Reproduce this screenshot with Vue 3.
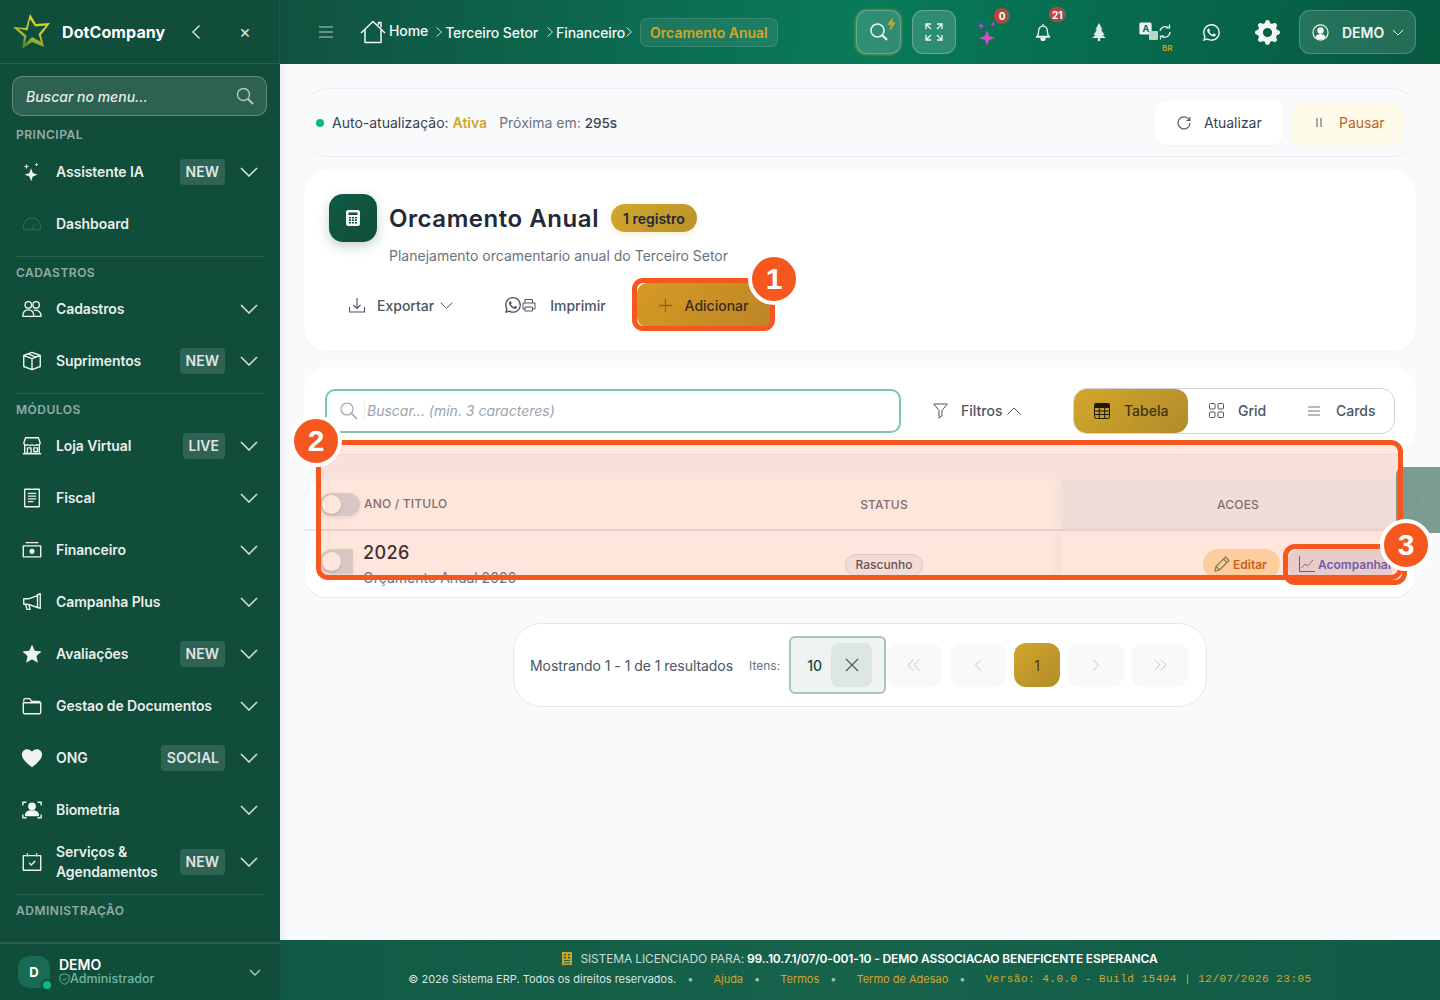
<script setup>
const icons = {
  sparkles: '<path fill="currentColor" stroke="none" d="M11 8l1.9 5.1L18 15l-5.1 1.9L11 22l-1.9-5.1L4 15l5.1-1.9zM6 3l.8 2.2L9 6l-2.2.8L6 9l-.8-2.2L3 6l2.2-.8zM17 2l.6 1.4L19 4l-1.4.6L17 6l-.6-1.4L15 4l1.4-.6z"/>',
  gauge: '<path d="M3 18a9.5 9.5 0 1 1 18 0zM12 18l3-6M6 14h1M17 14h1M12 8v1"/>',
  people: '<circle cx="8" cy="7.5" r="3.5"/><circle cx="16.5" cy="7.5" r="3.5"/><path d="M2 20c0-5 3-7 6-7s6 2 6 7zM14 13.5c4 -1 8 1.500 8 6.500h-8"/>',
  box: '<path d="M12 2.500l9 3.500v12l-9 3.500-9-3.500V6zM3 6l9 3.500L21 6M12 9.500v12M7.500 4.300l9 3.500"/>',
  store: '<path d="M4 10v10h16V10M2 20.500h20M3 9l2-6h14l2 6a3 3 0 0 1-4.500 1.500 3 3 0 0 1-4.500 0 3 3 0 0 1-4.500 0A3 3 0 0 1 3 9zM7 20v-6h4v6M14 14h4v4h-4z"/>',
  receipt: '<path d="M4 2.500h16v19H4zM7.500 7h9M7.500 10h9M7.500 13h9M7.500 16h6" stroke-dasharray="none"/>',
  cash: '<path d="M5 4h14M2.500 7.500h19v12h-19z"/><circle cx="12" cy="13.500" r="2" fill="currentColor"/>',
  megaphone: '<path d="M21 3v16l-3-1V4zM18 5L8 8.500H3v6h5L18 18M5 14.500l1.500 5.500h3.500l-1.500-5"/>',
  star: '<path fill="currentColor" stroke="none" d="M12 1.500l3 7 7.500.7-5.700 5 1.700 7.300L12 17.700l-6.500 3.800 1.700-7.300-5.700-5 7.500-.7z"/>',
  folder: '<path d="M3 7V5.500A1.500 1.500 0 0 1 4.500 4h5l2 3h8A1.500 1.500 0 0 1 21 8.500M2.500 8.500h19V19a1.500 1.500 0 0 1-1.500 1.500H4A1.500 1.500 0 0 1 2.500 19z"/>',
  heart: '<path fill="currentColor" stroke="none" d="M12 22C4 16 1 12.500 1 8.300 1 5 3.500 2.500 6.700 2.500c2.100 0 4.100 1 5.300 2.800 1.200-1.800 3.200-2.800 5.300-2.800C20.500 2.500 23 5 23 8.300 23 12.500 20 16 12 22z"/>',
  face: '<path d="M2 7V3.500h4M18 3.500h4V7M2 17v3.500h4M18 20.500h4V17"/><circle cx="12" cy="8" r="3.500" fill="currentColor"/><path fill="currentColor" d="M5 18c0-3.500 3-5 7-5s7 1.500 7 5z"/>',
  calendar: '<path d="M2.500 5h19v16h-19zM7 2.500V6M17 2.500V6M9 13l2.200 2.200L15.500 11"/>'
}

const menu = [
  { title: 'PRINCIPAL', items: [
    { label: 'Assistente IA', icon: 'sparkles', badge: 'NEW', caret: true },
    { label: 'Dashboard', icon: 'gauge', dim: true }
  ] },
  { title: 'CADASTROS', items: [
    { label: 'Cadastros', icon: 'people', caret: true },
    { label: 'Suprimentos', icon: 'box', badge: 'NEW', caret: true }
  ] },
  { title: 'MÓDULOS', items: [
    { label: 'Loja Virtual', icon: 'store', badge: 'LIVE', caret: true },
    { label: 'Fiscal', icon: 'receipt', caret: true },
    { label: 'Financeiro', icon: 'cash', caret: true },
    { label: 'Campanha Plus', icon: 'megaphone', caret: true },
    { label: 'Avaliações', icon: 'star', badge: 'NEW', caret: true },
    { label: 'Gestao de Documentos', icon: 'folder', caret: true },
    { label: 'ONG', icon: 'heart', badge: 'SOCIAL', caret: true },
    { label: 'Biometria', icon: 'face', caret: true },
    { label: 'Serviços & Agendamentos', icon: 'calendar', badge: 'NEW', caret: true }
  ] },
  { title: 'ADMINISTRAÇÃO', items: [] }
]
const whatsapp = 'M13.601 2.326A7.854 7.854 0 0 0 7.994 0C3.627 0 .068 3.558.064 7.926c0 1.399.366 2.76 1.057 3.965L0 16l4.204-1.102a7.9 7.9 0 0 0 3.79.965h.004c4.368 0 7.926-3.558 7.93-7.93A7.898 7.898 0 0 0 13.6 2.326zM7.994 14.521a6.573 6.573 0 0 1-3.356-.92l-.24-.144-2.494.654.666-2.433-.156-.251a6.56 6.56 0 0 1-1.007-3.505c0-3.626 2.957-6.584 6.591-6.584a6.56 6.56 0 0 1 4.66 1.931 6.557 6.557 0 0 1 1.928 4.66c-.004 3.639-2.961 6.592-6.592 6.592zm3.615-4.934c-.197-.099-1.17-.578-1.353-.646-.182-.065-.315-.099-.445.099-.133.197-.513.646-.627.775-.114.133-.232.148-.43.05-.197-.1-.836-.308-1.592-.985-.59-.525-.985-1.175-1.103-1.372-.114-.198-.011-.304.088-.403.087-.088.197-.232.296-.346.1-.114.133-.198.198-.33.065-.134.034-.248-.015-.347-.05-.099-.445-1.076-.612-1.47-.16-.389-.323-.335-.445-.34-.114-.007-.247-.007-.38-.007a.729.729 0 0 0-.529.247c-.182.198-.691.677-.691 1.654 0 .977.71 1.916.81 2.049.098.133 1.394 2.132 3.383 2.992.47.205.84.326 1.129.418.475.152.904.129 1.246.08.38-.058 1.171-.48 1.338-.943.164-.464.164-.86.114-.943-.049-.084-.182-.133-.38-.232z'
const gear = 'M9.405 1.05c-.413-1.4-2.397-1.4-2.81 0l-.1.34a1.464 1.464 0 0 1-2.105.872l-.31-.17c-1.283-.698-2.686.705-1.987 1.987l.169.311c.446.82.023 1.841-.872 2.105l-.34.1c-1.4.413-1.4 2.397 0 2.81l.34.1a1.464 1.464 0 0 1 .872 2.105l-.17.31c-.698 1.283.705 2.686 1.987 1.987l.311-.169a1.464 1.464 0 0 1 2.105.872l.1.34c.413 1.4 2.397 1.4 2.81 0l.1-.34a1.464 1.464 0 0 1 2.105-.872l.31.17c1.283.698 2.686-.705 1.987-1.987l-.169-.311a1.464 1.464 0 0 1 .872-2.105l.34-.1c1.4-.413 1.4-2.397 0-2.81l-.34-.1a1.464 1.464 0 0 1-.872-2.105l.17-.31c.698-1.283-.705-2.686-1.987-1.987l-.311.169a1.464 1.464 0 0 1-2.105-.872l-.1-.34zM8 10.93a2.929 2.929 0 1 1 0-5.86 2.929 2.929 0 0 1 0 5.858z'
</script>

<template>
  <div class="app">
    <aside class="sidebar">
      <div class="brand">
        <svg class="logo" width="38" height="38" viewBox="0 0 38 38">
          <defs>
            <linearGradient id="logoGrad" x1="0.7" y1="0" x2="0.2" y2="1">
              <stop offset="0" stop-color="#e8dc2c" />
              <stop offset="0.55" stop-color="#b5c22c" />
              <stop offset="1" stop-color="#2f7a3a" />
            </linearGradient>
          </defs>
          <path fill="url(#logoGrad)" fill-rule="evenodd" d="M17 1l6 10 14-1-9 12 3 12-12-5L9 36l2-12L0 14l13 1zM17 6l-2.500 11.500L5 15.500l8.500 7L12 31l7-7 9 5-2.500-8L33 12.500l-11 1z" />
        </svg>
        <span class="brand-name">DotCompany</span>
        <svg class="brand-back" width="10" height="16" viewBox="0 0 10 16" fill="none" stroke="currentColor" stroke-width="1.500"><path d="M8.500 1.500L2 8l6.500 6.500" /></svg>
        <span class="brand-close">×</span>
      </div>
      <div class="menu-search">
        <span>Buscar no menu...</span>
        <svg width="18" height="18" viewBox="0 0 18 18" fill="none" stroke="currentColor" stroke-width="1.400"><circle cx="7.500" cy="7.500" r="6" /><path d="M12 12l5 5" stroke-width="2" /></svg>
      </div>
      <nav class="nav">
        <section v-for="(sec, i) in menu" :key="sec.title" class="nav-section" :class="{ first: i === 0 }">
          <h6>{{ sec.title }}</h6>
          <a v-for="item in sec.items" :key="item.label" class="nav-item">
            <svg class="nav-icon" :class="{ dim: item.dim }" width="22" height="22" viewBox="0 0 24 24" fill="none" stroke="currentColor" stroke-width="1.500" stroke-linejoin="round" v-html="icons[item.icon]"></svg>
            <span class="nav-label">{{ item.label }}</span>
            <span v-if="item.badge" class="nav-badge">{{ item.badge }}</span>
            <svg v-if="item.caret" class="nav-caret" width="18" height="10" viewBox="0 0 18 10" fill="none" stroke="currentColor" stroke-width="1.500"><path d="M1 1l8 8 8-8" /></svg>
          </a>
        </section>
      </nav>
      <div class="user">
        <div class="avatar">D<i></i></div>
        <div class="user-text">
          <strong>DEMO</strong>
          <span>
            <svg width="11" height="12" viewBox="0 0 12 13" fill="none" stroke="currentColor" stroke-width="1"><path d="M6 .8l5 1.700v4C11 9.500 8.500 11.500 6 12.300 3.500 11.500 1 9.500 1 6.500v-4zM3.800 6.300l1.600 1.600 2.800-2.800" /></svg>Administrador
          </span>
        </div>
        <svg class="user-caret" width="12" height="7" viewBox="0 0 12 7" fill="none" stroke="currentColor" stroke-width="1.300"><path d="M1 1l5 5 5-5" /></svg>
      </div>
    </aside>

    <div class="main">
      <header class="topbar">
        <div class="crumbs">
          <svg class="burger" width="14" height="12" viewBox="0 0 14 12" fill="none" stroke="currentColor" stroke-width="1.200"><path d="M0 1h14M0 6h14M0 11h14" /></svg>
          <svg class="home-icon" width="26" height="24" viewBox="0 0 26 24" fill="none" stroke="currentColor" stroke-width="1.500" stroke-linejoin="round"><path d="M1 13L13 1.500 25 13M5 10v12.500h16V10M18.500 5V2.500h2.500v5" /></svg>
          <span class="crumb home">Home</span>
          <svg class="sep s1" width="8" height="10" viewBox="0 0 8 10" fill="none" stroke="currentColor"><path d="M1.500 .5L6.500 5l-5 4.500" /></svg>
          <span class="crumb">Terceiro Setor</span>
          <svg class="sep s2" width="8" height="10" viewBox="0 0 8 10" fill="none" stroke="currentColor"><path d="M1.500 .5L6.500 5l-5 4.500" /></svg>
          <span class="crumb">Financeiro</span>
          <svg class="sep" width="8" height="10" viewBox="0 0 8 10" fill="none" stroke="currentColor"><path d="M1.500 .5L6.500 5l-5 4.500" /></svg>
          <span class="crumb-current">Orcamento Anual</span>
        </div>
        <div class="tools">
          <button class="tool-btn search-glow">
            <svg width="20" height="20" viewBox="0 0 20 20" fill="none" stroke="currentColor" stroke-width="1.500"><circle cx="8.500" cy="8.500" r="6.500" /><path d="M13.500 13.500L18 18" stroke-width="2.200" /></svg>
            <svg class="bolt" width="9" height="14" viewBox="0 0 9 14"><path fill="#b8a83a" d="M6 0L0 8h3.500L2.500 14 9 5.500H5.300z" /></svg>
          </button>
          <button class="tool-btn">
            <svg width="18" height="18" viewBox="0 0 18 18" fill="none" stroke="currentColor" stroke-width="1.300"><path d="M1 6V1h5M1 1l5 5M12 1h5v5M17 1l-5 5M1 12v5h5M1 17l5-5M12 17h5v-5M17 17l-5-5" /></svg>
          </button>
          <div class="tool-slot">
            <svg width="26" height="28" viewBox="0 0 26 28">
              <path fill="#d94bc6" d="M13 12l2 6 6 2-6 2-2 6-2-6-6-2 6-2z" />
              <path fill="#c23fd6" d="M7 4l1 3 3 1-3 1-1 3-1-3-3-1 3-1zM19 3l.8 2.200L22 6l-2.200.8L19 9l-.8-2.200L16 6l2.200-.8z" />
            </svg>
            <b class="count c0">0</b>
          </div>
          <div class="tool-slot">
            <svg width="16" height="18" viewBox="0 0 16 18" fill="none" stroke="#f2f7f5" stroke-width="1.300"><path d="M2 13.500h12c-1.200-1.400-1.600-2.500-1.600-5 0-3-1.500-5.300-4.400-5.300S3.600 5.500 3.600 8.500c0 2.500-.4 3.600-1.600 5zM1 14h14M8 1v2" /><path fill="#f2f7f5" d="M6 15.500h4a2 2 0 0 1-4 0z" /></svg>
            <b class="count c21">21</b>
          </div>
          <div class="tool-slot">
            <svg width="14" height="18" viewBox="0 0 14 18"><path fill="#dcebe6" d="M7 0l3.500 6.500H9l3.500 5.500H10.500L14 15H8.200v3H5.800v-3H0l3.500-3H1.500L5 6.500H3.500z" /></svg>
          </div>
          <div class="tool-slot">
            <svg width="32" height="20" viewBox="0 0 32 20" fill="none" stroke="#f0f6f4" stroke-width="1.200">
              <rect x="1" y="1" width="11" height="11" rx="1" fill="#e9f2ef" />
              <text x="3.500" y="10" font-size="9" font-weight="700" font-family="Inter, sans-serif" fill="#0a6a50" stroke="none">A</text>
              <rect x="10" y="9" width="9" height="9" rx="1" fill="#b9d5cc" stroke="none" />
              <path d="M21 9a5.500 5.500 0 0 1 9-3M31 10a5.500 5.500 0 0 1-9 4M30.500 2.500V6H27M21.500 17.500V14H25" />
            </svg>
            <span class="br">BR</span>
          </div>
          <div class="tool-slot">
            <svg width="17" height="17" viewBox="0 0 16 16"><path fill="#f2f7f5" :d="whatsapp" /></svg>
          </div>
          <div class="tool-slot">
            <svg width="25" height="25" viewBox="0 0 16 16"><path fill="#f2f7f5" :d="gear" /></svg>
          </div>
          <button class="user-btn">
            <svg width="17" height="17" viewBox="0 0 18 18" fill="none" stroke="currentColor" stroke-width="1.300"><circle cx="9" cy="9" r="8" /><circle cx="9" cy="7" r="2.800" fill="currentColor" /><path fill="currentColor" stroke="none" d="M3.500 14c1-2.500 3-3.500 5.500-3.500s4.500 1 5.500 3.500A7.500 7.500 0 0 1 9 16.500 7.500 7.500 0 0 1 3.500 14z" /></svg>
            <span>DEMO</span>
            <svg width="12" height="7" viewBox="0 0 12 7" fill="none" stroke="currentColor" stroke-width="1"><path d="M1 1l5 5 5-5" /></svg>
          </button>
        </div>
      </header>

      <main class="content">
        <div class="refresh-bar">
          <i class="live-dot"></i>
          <span class="refresh-label">Auto-atualização: <b>Ativa</b></span>
          <span class="refresh-next">Próxima em: <em>295s</em></span>
          <button class="btn-refresh">
            <svg width="14" height="14" viewBox="0 0 14 14" fill="none" stroke="#4b5563" stroke-width="1.200"><path d="M12.500 4.500A6 6 0 1 0 13 7M12.800 1v3.500H9.500" /></svg>
            Atualizar
          </button>
          <button class="btn-pause">
            <svg width="8" height="9" viewBox="0 0 8 9" fill="none" stroke="#6b7280" stroke-width="1.200"><path d="M2 0v9M6 0v9" /></svg>
            Pausar
          </button>
        </div>

        <section class="page-head">
          <div class="head-row">
            <div class="head-icon">
              <svg width="14" height="16" viewBox="0 0 14 16"><rect x=".5" y=".5" width="13" height="15" rx="1.500" fill="#f4f8f6" stroke="#f4f8f6" /><rect x="2.500" y="2.500" width="9" height="2.500" fill="#114d3b" /><path d="M3 7h2v1.500H3zM6 7h2v1.500H6zM9 7h2v1.500H9zM3 9.500h2V11H3zM6 9.500h2V11H6zM9 9.500h2V11H9zM3 12h2v1.500H3zM6 12h2v1.500H6zM9 12h2v1.500H9z" fill="#114d3b" /></svg>
            </div>
            <h1>Orcamento Anual</h1>
            <span class="count-pill">1 registro</span>
          </div>
          <p class="head-sub">Planejamento orcamentario anual do Terceiro Setor</p>
          <div class="head-actions">
            <button class="act">
              <svg width="16" height="16" viewBox="0 0 16 16" fill="none" stroke="currentColor" stroke-width="1.100"><path d="M.5 10v5h15v-5M8 1v10M4.500 8L8 11.500 11.500 8" /></svg>
              <span>Exportar</span>
              <svg class="act-caret" width="13" height="7" viewBox="0 0 13 7" fill="none" stroke="currentColor"><path d="M.7.7l5.800 5.600L12.300.7" /></svg>
            </button>
            <button class="act">
              <svg class="act-double" width="31" height="17" viewBox="0 0 31 17" fill="none" stroke="currentColor">
                <svg width="16" height="16" viewBox="0 0 16 16"><path fill="currentColor" stroke="none" :d="whatsapp" /></svg>
                <path d="M20 6V2.500h7.500V6M20 12h-2V6h12v6h-2.500M20 10h7.500v4H20z" />
              </svg>
              <span>Imprimir</span>
            </button>
            <button class="act act-add">
              <svg width="13" height="13" viewBox="0 0 13 13" fill="none" stroke="#7d6a2a" stroke-width="1.300"><path d="M6.500 0v13M0 6.500h13" /></svg>
              <span>Adicionar</span>
            </button>
          </div>
        </section>

        <section class="toolbar">
          <div class="search">
            <svg width="18" height="18" viewBox="0 0 18 18" fill="none" stroke="#9ca3af" stroke-width="1.100"><circle cx="7" cy="7" r="6" /><path d="M11.500 11.500L17 17" stroke-width="1.600" /></svg>
            <span class="search-ph">Buscar... (mín. 3 caracteres)</span>
          </div>
          <button class="filters">
            <svg width="15" height="16" viewBox="0 0 15 16" fill="none" stroke="#4b5563"><path d="M.7 1h13.600L9 7.500V13l-3 2V7.500z" /></svg>
            <span>Filtros</span>
            <svg width="14" height="8" viewBox="0 0 14 8" fill="none" stroke="#4b5563"><path d="M.5 7.500L7 1l6.500 6.500" /></svg>
          </button>
          <div class="views">
            <button class="view active">
              <svg width="16" height="16" viewBox="0 0 16 16"><rect x=".5" y=".5" width="15" height="15" rx="2" fill="none" stroke="#1f1a08" /><path d="M.5 .5h15V5H.5z" fill="#1f1a08" /><path d="M0 8h16M0 11.500h16M5.300 5v11M10.700 5v11" stroke="#1f1a08" fill="none" /></svg>
              <span>Tabela</span>
            </button>
            <button class="view grid">
              <svg width="15" height="15" viewBox="0 0 15 15" fill="none" stroke="#4b5563"><rect x=".5" y=".5" width="5.500" height="5.500" rx="1" /><rect x="9" y=".5" width="5.500" height="5.500" rx="1" /><rect x=".5" y="9" width="5.500" height="5.500" rx="1" /><rect x="9" y="9" width="5.500" height="5.500" rx="1" /></svg>
              <span>Grid</span>
            </button>
            <button class="view cards">
              <svg width="12" height="10" viewBox="0 0 12 10" fill="none" stroke="#9ca3af" stroke-width="1.400"><path d="M0 1h12M0 5h12M0 9h12" /></svg>
              <span>Cards</span>
            </button>
          </div>
        </section>

        <section class="table-card">
          <table>
            <colgroup><col class="c-title" /><col class="c-status" /><col class="c-acts" /></colgroup>
            <thead>
              <tr>
                <th class="th-title"><span class="switch"><i></i></span>ANO / TITULO</th>
                <th>STATUS</th>
                <th class="sticky">ACOES</th>
              </tr>
            </thead>
            <tbody>
              <tr>
                <td class="td-title">
                  <div class="title-wrap">
                    <span class="switch cut"><i></i></span>
                    <div>
                      <div class="year">2026</div>
                      <div class="year-sub">Orçamento Anual 2026</div>
                    </div>
                  </div>
                </td>
                <td class="td-status"><span class="status">Rascunho</span></td>
                <td class="sticky td-acts">
                  <div class="acts">
                    <button class="row-btn edit">
                      <svg width="16" height="16" viewBox="0 0 16 16" fill="none" stroke="#6b7a5a" stroke-width="1.100"><path d="M11.500 1l3.500 3.500L5.500 14 1 15l1-4.500zM9.500 3l3.500 3.500M2 10.500L5.500 14" /></svg>
                      Editar
                    </button>
                    <button class="row-btn track">
                      <svg width="16" height="16" viewBox="0 0 16 16" fill="none"><path d="M.5 0v15.500H16" stroke="#3f6d4f" /><path d="M2.500 12l3.500-4 2.500 2L14 4" stroke="#6b7280" /></svg>
                      Acompanhar
                    </button>
                  </div>
                </td>
              </tr>
            </tbody>
          </table>
        </section>

        <section class="pager-card">
          <span class="pg-info">Mostrando 1 - 1 de 1 resultados</span>
          <span class="pg-items">Itens:</span>
          <div class="pg-select">
            <span>10</span>
            <i>
              <svg width="14" height="14" viewBox="0 0 14 14" fill="none" stroke="#4b5563" stroke-width="1.100"><path d="M1 1l12 12M13 1L1 13" /></svg>
            </i>
          </div>
          <button class="pg wide"><svg width="14" height="12" viewBox="0 0 14 12" fill="none" stroke="#c5c9cf"><path d="M6.500 .5L1 6l5.500 5.500M12.500 .5L7 6l5.500 5.500" /></svg></button>
          <button class="pg wide"><svg width="8" height="12" viewBox="0 0 8 12" fill="none" stroke="#c5c9cf"><path d="M7 .5L1.500 6 7 11.500" /></svg></button>
          <button class="pg on">1</button>
          <button class="pg wide"><svg width="8" height="12" viewBox="0 0 8 12" fill="none" stroke="#c5c9cf"><path d="M1 .5L6.500 6 1 11.500" /></svg></button>
          <button class="pg wide"><svg width="14" height="12" viewBox="0 0 14 12" fill="none" stroke="#c5c9cf"><path d="M1.500 .5L7 6l-5.500 5.500M7.500 .5L13 6l-5.500 5.500" /></svg></button>
        </section>
      </main>

      <footer class="footer">
        <div class="lic">
          <svg width="10" height="13" viewBox="0 0 10 13"><path fill="#c9a227" d="M0 0h10v13H0z" /><path fill="#17634c" d="M2 2h2v1.500H2zM6 2h2v1.500H6zM2 5h2v1.500H2zM6 5h2v1.500H6zM2 8h6v1H2zM2 10.500h6v1H2z" /></svg>
          <span>SISTEMA LICENCIADO PARA:</span>
          <b>99..10.7.1/07/0-001-10 - DEMO ASSOCIACAO BENEFICENTE ESPERANCA</b>
        </div>
        <div class="legal">
          <span class="copy">© 2026 Sistema ERP. Todos os direitos reservados.</span>
          <i>•</i><a>Ajuda</a>
          <i>•</i><a>Termos</a>
          <i>•</i><a>Termo de Adesao</a>
          <i>•</i><code>Versão: 4.0.0 - Build 15494 | 12/07/2026 23:05</code>
        </div>
      </footer>
    </div>

    <div class="side-tab">
      <svg width="8" height="14" viewBox="0 0 8 14" fill="none" stroke="#6f9184"><path d="M7 1L1 7l6 6" /></svg>
    </div>

    <div class="mark mark-1"></div>
    <div class="mark mark-2"></div>
    <div class="mark mark-3"></div>
    <span class="pin pin-1">1</span>
    <span class="pin pin-2">2</span>
    <span class="pin pin-3">3</span>
  </div>
</template>

<style>
html, body { margin: 0; background: #f8fafc; }
</style>

<style scoped>
* { box-sizing: border-box; }
button { font: inherit; border: 0; background: none; padding: 0; color: inherit; }

.app {
  position: relative;
  display: flex;
  width: 1440px;
  height: 1000px;
  overflow: hidden;
  font-family: Inter, "Noto Sans", sans-serif;
  color: #374151;
  background: #f8fafc;
}

/* sidebar */
.sidebar {
  flex: 0 0 280px;
  display: flex;
  flex-direction: column;
  background: #114d3b;
  color: rgba(255, 255, 255, .93);
  box-shadow: 2px 0 10px rgba(15, 30, 50, .08);
  z-index: 2;
}
.brand {
  height: 64px;
  display: flex;
  align-items: center;
  padding-left: 13px;
  border-bottom: 1px solid rgba(255, 255, 255, .1);
  border-right: 1px solid rgba(255, 255, 255, .06);
}
.logo { flex: none; }
.brand-name {
  width: 111px;
  margin-left: 11px;
  font-size: 16px;
  font-weight: 700;
  letter-spacing: .1px;
  color: #fff;
  white-space: nowrap;
  overflow: hidden;
  text-overflow: ellipsis;
}
.brand-back { margin-left: 18px; color: rgba(255, 255, 255, .8); }
.brand-close { margin-left: 38px; font-size: 18px; color: rgba(255, 255, 255, .85); }

.menu-search {
  height: 40px;
  margin: 12px 13px 0 12px;
  padding: 0 12px 0 13px;
  display: flex;
  align-items: center;
  justify-content: space-between;
  background: rgba(255, 255, 255, .12);
  border: 1px solid rgba(255, 255, 255, .25);
  border-radius: 10px;
  font-size: 14px;
  font-style: italic;
  font-weight: 500;
  color: rgba(255, 255, 255, .9);
}
.menu-search svg { color: rgba(255, 255, 255, .65); }

.nav { flex: 1; padding-top: 4px; overflow: hidden; }
.nav-section { border-top: 1px solid rgba(255, 255, 255, .1); margin: 6px 16px 0; }
.nav-section.first { border-top: 0; margin-top: 0; }
.nav-section h6 {
  margin: 0;
  height: 26px;
  padding-top: 9px;
  font-size: 12px;
  line-height: 14px;
  font-weight: 600;
  letter-spacing: .5px;
  color: rgba(255, 255, 255, .55);
}
.nav-section.first h6 { padding-top: 8px; }
.nav-item {
  height: 52px;
  display: flex;
  align-items: center;
  font-size: 14px;
  line-height: 20px;
  font-weight: 600;
}
.nav-icon { flex: none; margin: 0 13px 0 5px; }
.nav-icon.dim { color: #226a55; }
.nav-label { flex: 1; max-width: 170px; letter-spacing: -.1px; }
.nav-badge {
  margin-left: auto;
  height: 26px;
  padding: 0 6px;
  display: flex;
  align-items: center;
  background: rgba(255, 255, 255, .13);
  border-radius: 4px;
  font-size: 14px;
  color: rgba(255, 255, 255, .85);
}
.nav-caret { flex: none; margin: 0 6px 0 15px; color: rgba(255, 255, 255, .85); }
.nav-label + .nav-caret { margin-left: auto; }

.user {
  height: 58px;
  display: flex;
  align-items: center;
  padding: 0 18px;
  border-top: 2px solid rgba(255, 255, 255, .12);
}
.avatar {
  position: relative;
  flex: none;
  width: 32px;
  height: 32px;
  display: flex;
  align-items: center;
  justify-content: center;
  border-radius: 12px;
  background: #1a6b55;
  font-size: 13px;
  font-weight: 700;
  color: #fff;
}
.avatar i {
  position: absolute;
  right: -1px;
  bottom: -1px;
  width: 8px;
  height: 8px;
  border-radius: 50%;
  background: #10b981;
  box-shadow: 0 0 0 2px #114d3b;
}
.user-text { margin-left: 9px; display: flex; flex-direction: column; }
.user-text strong { font-size: 14px; line-height: 14px; font-weight: 600; color: #fff; }
.user-text span {
  display: flex;
  align-items: center;
  font-size: 12.5px;
  line-height: 14px;
  font-weight: 500;
  color: #6fb89f;
}
.user-caret { margin-left: auto; margin-right: 1px; color: rgba(255, 255, 255, .7); }

/* top bar */
.main { flex: 1; min-width: 0; display: flex; flex-direction: column; }
.topbar {
  flex: 0 0 64px;
  display: flex;
  align-items: center;
  justify-content: space-between;
  padding: 0 24px 0 39px;
  background: linear-gradient(100deg, #11523f 0%, #087a5a 50%, #06583f 100%);
  color: #f1f7f5;
  box-shadow: 0 1px 4px rgba(15, 30, 50, .1);
}
.crumbs { display: flex; align-items: center; }
.burger { color: rgba(255, 255, 255, .7); margin-right: 27px; }
.home-icon { margin-right: 3px; margin-top: -1px; }
.crumb { font-size: 14px; font-weight: 500; letter-spacing: -.1px; }
.crumb.home { margin-top: -3px; }
.sep { margin: 0 0 0 0; color: rgba(255, 255, 255, .8); flex: none; }
.sep.s1 { margin: 0 2px 0 7px; }
.sep.s2 { margin: 0 2px 0 8px; }
.crumb-current {
  margin-left: 7px;
  height: 29px;
  padding: 0 9px;
  display: flex;
  align-items: center;
  background: rgba(255, 255, 255, .08);
  border: 1px solid rgba(255, 255, 255, .12);
  border-radius: 7px;
  font-size: 14px;
  font-weight: 600;
  color: #d4a52a;
}
.tools { display: flex; align-items: center; }
.tool-btn {
  position: relative;
  width: 44px;
  height: 44px;
  display: flex;
  align-items: center;
  justify-content: center;
  margin-right: 11px;
  background: rgba(255, 255, 255, .16);
  border: 1px solid rgba(255, 255, 255, .25);
  border-radius: 11px;
  color: #f1f7f5;
}
.search-glow {
  width: 45px;
  box-shadow: -1px 1px 3px rgba(212, 165, 42, .45), 1px -1px 3px rgba(212, 165, 42, .35);
}
.bolt { position: absolute; top: 6px; right: 4px; }
.tool-btn + .tool-slot { margin-left: -8px; }
.tool-slot {
  position: relative;
  width: 56px;
  height: 44px;
  display: flex;
  align-items: center;
  justify-content: center;
}
.count {
  position: absolute;
  height: 16px;
  min-width: 16px;
  padding: 0 3px;
  display: flex;
  align-items: center;
  justify-content: center;
  border-radius: 9px;
  background: linear-gradient(90deg, #d63b3b, #a94a40 60%, #5f6f58);
  font-size: 10px;
  font-weight: 700;
  color: #fff;
}
.c0 { top: -2px; left: 35px; }
.c21 { top: -3px; left: 34px; height: 15px; }
.br {
  position: absolute;
  left: 35px;
  top: 33px;
  font-size: 8px;
  font-weight: 600;
  color: #c9a227;
}
.user-btn {
  width: 117px;
  height: 44px;
  margin-left: 4px;
  display: flex;
  align-items: center;
  padding-left: 12px;
  background: rgba(255, 255, 255, .12);
  border: 1px solid rgba(255, 255, 255, .2);
  border-radius: 11px;
  font-size: 14px;
  font-weight: 600;
  color: #f1f7f5;
}
.user-btn span { margin: 0 8px 0 13px; }

/* content */
.content { flex: 1; min-height: 0; padding: 24px 24px 0; background: #f8fafc; display: flex; flex-direction: column; }
.refresh-bar {
  height: 69px;
  flex: none;
  display: flex;
  align-items: center;
  padding: 0 13px 0 12px;
  border-top: 1px solid #e8ecf1;
  border-bottom: 1px solid #e8ecf1;
  border-radius: 24px;
  font-size: 14px;
}
.live-dot { width: 8px; height: 8px; margin-right: 8px; border-radius: 50%; background: #10b981; }
.refresh-label { color: #374151; }
.refresh-label b { font-weight: 600; color: #d4a52a; }
.refresh-next { margin-left: 12px; color: #6b7280; }
.refresh-next em { font-style: normal; font-weight: 500; font-size: 13.5px; color: #374151; }
.btn-refresh, .btn-pause {
  height: 44px;
  display: flex;
  align-items: center;
  border-radius: 10px;
}
.btn-refresh {
  margin-left: auto;
  width: 128px;
  gap: 13px;
  padding-left: 22px;
  background: #fff;
  color: #374151;
  box-shadow: 0 1px 3px rgba(15, 30, 50, .03);
}
.btn-pause {
  width: 112px;
  margin-left: 8px;
  gap: 16px;
  padding-left: 24px;
  background: #fffbeb;
  color: #c2611b;
}

.page-head {
  flex: none;
  margin-top: 12px;
  height: 182px;
  padding: 25px 25px 0;
  background: #fff;
  border-radius: 24px;
  box-shadow: 0 1px 3px rgba(15, 30, 50, .03);
}
.head-row { display: flex; align-items: center; height: 48px; }
.head-icon {
  width: 48px;
  height: 48px;
  display: flex;
  align-items: center;
  justify-content: center;
  border-radius: 14px;
  background: linear-gradient(135deg, #0f5a44, #114d3b);
  box-shadow: 0 4px 12px rgba(17, 77, 59, .25);
}
.head-row h1 {
  margin: 0 12px 0 12px;
  font-size: 24px;
  font-weight: 600;
  letter-spacing: .55px;
  color: #1f2937;
}
.count-pill {
  height: 28px;
  padding: 0 12px;
  display: flex;
  align-items: center;
  border-radius: 14px;
  background: linear-gradient(135deg, #d4a72c, #b8922a);
  box-shadow: 0 2px 6px rgba(212, 167, 44, .25);
  font-size: 14px;
  font-weight: 600;
  color: #1f2937;
}
.head-sub { margin: 4px 0 0 60px; font-size: 14px; line-height: 20px; color: #6b7280; }
.head-actions { display: flex; gap: 12px; margin-top: 17px; }
.act {
  height: 44px;
  display: flex;
  align-items: center;
  padding: 0 20px;
  font-size: 14px;
  font-weight: 500;
  color: #4b5563;
  border-radius: 10px;
}
.act > svg:first-child { margin-right: 12px; }
.act-double { margin-right: 14px !important; }
.act-caret { margin-left: 6px; }
.act-add {
  margin-left: -1px;
  width: 135px;
  padding-left: 22px;
  background: linear-gradient(135deg, #d4a025, #b98828);
  color: #2f2a1a;
}
.act-add > svg:first-child { margin-right: 13px; }

.toolbar {
  flex: none;
  margin-top: 16px;
  height: 88px;
  padding: 21px 21px 0;
  display: flex;
  align-items: center;
  align-self: stretch;
  background: #fff;
  border-bottom: 1px solid #eef0f4;
  border-radius: 24px;
  padding-bottom: 21px;
}
.search {
  width: 576px;
  height: 44px;
  display: flex;
  align-items: center;
  padding-left: 13px;
  border: 2px solid #7cc4b0;
  border-radius: 10px;
}
.search-ph {
  margin-left: 6px;
  padding-left: 2px;
  border-left: 1px solid #f0ece0;
  font-size: 14px;
  font-style: italic;
  color: #9ca3af;
}
.filters {
  margin-left: 32px;
  display: flex;
  align-items: center;
  font-size: 14px;
  font-weight: 500;
  color: #4b5563;
}
.filters span { margin: 0 5px 0 13px; }
.views {
  margin-left: auto;
  width: 322px;
  height: 46px;
  display: flex;
  align-items: center;
  border: 1px solid #d1d5db;
  border-radius: 14px;
  font-size: 14px;
  font-weight: 500;
  color: #4b5563;
}
.view { height: 44px; display: flex; align-items: center; }
.view.active {
  width: 114px;
  gap: 14px;
  padding-left: 20px;
  background: linear-gradient(135deg, #d4a72c, #b08c2a);
  border-radius: 13px;
  color: #3f3413;
}
.view.grid { width: 120px; padding-left: 21px; gap: 14px; }
.view.cards { gap: 16px; }

.table-card {
  flex: none;
  margin-top: 24px;
  height: 119px;
  background: #fff;
  border-radius: 22px;
  border-bottom: 1px solid #e5e7eb;
  border-left: 1px solid #f1f3f6;
  border-right: 1px solid #f1f3f6;
  overflow: hidden;
}
table { width: 1110px; table-layout: fixed; border-collapse: collapse; }
.c-title { width: 402px; }
.c-status { width: 354px; }
.c-acts { width: 354px; }
th {
  height: 51px;
  padding: 0;
  border-bottom: 2px solid #e5e7eb;
  font-size: 12px;
  font-weight: 500;
  letter-spacing: .2px;
  color: #6b7280;
  text-align: center;
}
th.sticky { background: #f0f5f8; }
.th-title { text-align: left; padding-left: 15px; }
.th-title .switch { margin-right: 4px; vertical-align: middle; }
td { padding: 0; vertical-align: top; }
.sticky { box-shadow: -8px 0 10px rgba(15, 30, 50, .025); }
.switch {
  position: relative;
  display: inline-block;
  width: 40px;
  height: 23px;
  border-radius: 12px;
  background: #d4dbe3;
  box-shadow: 0 2px 4px rgba(15, 30, 50, .08);
}
.switch i {
  position: absolute;
  left: 2px;
  top: 2px;
  width: 19px;
  height: 19px;
  border-radius: 50%;
  background: #fff;
  box-shadow: 0 1px 3px rgba(15, 30, 50, .2);
}
.switch.cut { width: 33px; height: 25px; margin-top: 9px; border-radius: 12px 0 0 12px; flex: none; }
.switch.cut i { top: 3px; }
.title-wrap { display: flex; gap: 10px; padding: 9px 0 0 15px; }
.year { font-size: 18px; line-height: 26px; font-weight: 500; color: #1f2937; letter-spacing: .4px; }
.year-sub { margin-top: 2px; font-size: 14px; line-height: 20px; color: #6b7280; }
.td-status { text-align: center; padding-top: 22px; }
.status {
  display: inline-flex;
  align-items: center;
  height: 22px;
  padding: 0 10px;
  background: #f3f4f6;
  border: 1px solid #d8dbe0;
  border-radius: 11px;
  font-size: 12px;
  font-weight: 500;
  color: #4b5563;
}
.acts {
  margin: 18px 0 0 142px;
  width: 189px;
  height: 30px;
  display: flex;
  gap: 7px;
  overflow: hidden;
  white-space: nowrap;
}
.row-btn {
  flex: none;
  height: 30px;
  display: flex;
  align-items: center;
  gap: 3px;
  border-radius: 15px;
  font-size: 12px;
  font-weight: 600;
}
.edit { width: 77px; padding-left: 11px; background: #fde3b4; color: #c2611b; }
.track { padding: 0 12px; background: #e6e8f4; color: #4f5fd0; }

.pager-card {
  flex: none;
  align-self: center;
  margin-top: 25px;
  width: 694px;
  height: 84px;
  display: flex;
  align-items: center;
  padding-left: 16px;
  background: #fff;
  border: 1px solid #e5e7eb;
  border-radius: 28px;
}
.pg-info { font-size: 14px; color: #4b5563; letter-spacing: -.05px; }
.pg-items { margin-left: 16px; font-size: 12px; color: #6b7280; }
.pg-select {
  margin-left: 9px;
  width: 97px;
  height: 58px;
  display: flex;
  align-items: center;
  padding-left: 16px;
  background: #eff4f2;
  border: 2px solid #a9c5bb;
  border-radius: 6px;
  font-size: 14px;
  font-weight: 500;
  color: #114d3b;
}
.pg-select i {
  margin-left: 9px;
  width: 41px;
  height: 44px;
  display: flex;
  align-items: center;
  justify-content: center;
  background: #dce7e3;
  border-radius: 8px;
}
.pg {
  height: 44px;
  margin-right: 8px;
  display: flex;
  align-items: center;
  justify-content: center;
  background: #f8f9fa;
  border-radius: 12px;
  font-size: 14px;
}
.pg.wide { width: 56px; }
.pg.on { width: 46px; background: linear-gradient(135deg, #d4a72c, #b08c2a); color: #4a3a10; }

.footer {
  flex: 0 0 60px;
  padding-top: 10px;
  background: linear-gradient(90deg, #125a45, #17634c 50%, #125a45);
  text-align: center;
}
.lic {
  display: flex;
  justify-content: center;
  align-items: center;
  gap: 3px;
  height: 16px;
  font-size: 12px;
  letter-spacing: -.15px;
  color: rgba(255, 255, 255, .78);
}
.lic svg { margin-right: 5px; }
.lic b { font-weight: 600; color: #fff; }
.legal {
  margin-top: 5px;
  display: flex;
  justify-content: center;
  align-items: center;
  height: 16px;
  font-size: 11px;
  color: #d4a52a;
}
.legal i { margin: 0 20px 0 11px; font-style: normal; color: rgba(255, 255, 255, .6); }
.legal .copy { color: rgba(255, 255, 255, .85); }
.legal code { font-family: "Liberation Mono", monospace; font-size: 11px; letter-spacing: .49px; }

/* overlays */
.side-tab {
  position: absolute;
  left: 1396px;
  top: 467px;
  width: 44px;
  height: 66px;
  display: flex;
  align-items: center;
  justify-content: center;
  background: #7c9c90;
  border-radius: 8px 0 0 8px;
}
.mark {
  position: absolute;
  border: 5px solid #f5571e;
  pointer-events: none;
}
.mark-1 { left: 632px; top: 278px; width: 143px; height: 53px; border-radius: 11px; background: rgba(249, 87, 30, .06); }
.mark-2 { left: 316px; top: 440px; width: 1087px; height: 140px; border-radius: 12px; background: rgba(249, 87, 30, .15); }
.mark-3 { left: 1283px; top: 544px; width: 124px; height: 41px; border-radius: 12px; background: rgba(249, 87, 30, .05); }
.pin {
  position: absolute;
  width: 52px;
  height: 52px;
  display: flex;
  align-items: center;
  justify-content: center;
  border: 4px solid #fff;
  border-radius: 50%;
  background: #f5571e;
  font-family: "Liberation Sans", sans-serif;
  font-size: 30px;
  font-weight: 700;
  color: #fff;
}
.pin-1 { left: 748px; top: 253px; }
.pin-2 { left: 290px; top: 415px; }
.pin-3 { left: 1380px; top: 519px; }
</style>
